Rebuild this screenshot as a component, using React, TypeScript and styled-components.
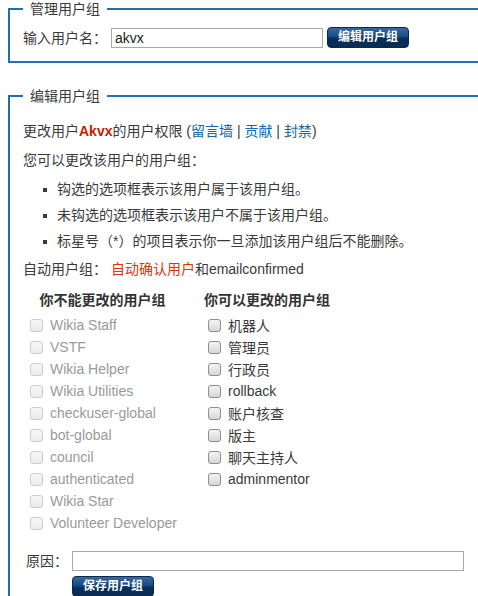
import { createGlobalStyle } from 'styled-components';
import styled from 'styled-components';

const GlobalStyle = createGlobalStyle`
  html, body {
    margin: 0;
    overflow: hidden;
    background: #fff;
  }

  body {
    padding: 0 0 0 8px;
    font-family: "Liberation Sans", "Noto Sans CJK SC", sans-serif;
    font-size: 14px;
    color: #3a3a3a;
  }
`;

const Fieldset = styled.fieldset<{ $top?: number }>`
  margin: ${({ $top }) => $top || 0}px 0 0 0;
  width: 100%;
  box-sizing: border-box;
  border: 2px solid #1f6fb2;
  border-right: none;
  padding: 9px 13px 13px 13px;
  min-inline-size: 0;
`;

const Legend = styled.legend`
  padding: 0 7px;
  line-height: 18px;
  font-size: 14px;
  color: #3a3a3a;
`;

const LookupRow = styled.div`
  display: flex;
  align-items: center;
  height: 21px;
  gap: 4px;
`;

const Label = styled.span`
  line-height: 20px;
  white-space: nowrap;
`;

const TextInput = styled.input<{ $width: number }>`
  width: ${({ $width }) => $width}px;
  height: 20px;
  box-sizing: border-box;
  margin: 0;
  padding: 0 3px;
  border: 1px solid #a9a9a9;
  font-family: "Liberation Sans", "Noto Sans CJK SC", sans-serif;
  font-size: 14px;
  color: #222;
  outline: none;
`;

const Button = styled.button`
  height: 21px;
  box-sizing: border-box;
  margin: 0;
  padding: 0 10px;
  border: 1px solid #062a52;
  border-radius: 4px;
  background: linear-gradient(to bottom, #3a689c 0%, #174a82 45%, #06305f 55%, #0a2b52 100%);
  color: #fff;
  font-family: "Liberation Sans", "Noto Sans CJK SC", sans-serif;
  font-size: 12px;
  font-weight: bold;
  line-height: 19px;
  white-space: nowrap;
`;

const Body = styled.div`
  padding-top: 7px;
`;

const Para = styled.p`
  margin: 0 0 8px 0;
  line-height: 21px;
`;

const User = styled.b`
  color: #cc1a00;
`;

const Link = styled.a<{ $red?: boolean }>`
  color: ${({ $red }) => ($red ? '#e2310c' : '#1269b0')};
  text-decoration: none;
`;

const Notes = styled.ul`
  margin: 0 0 7px 0;
  padding: 0;
  list-style: none;
`;

const Note = styled.li`
  position: relative;
  padding-left: 34px;
  line-height: 21px;

  & + & {
    margin-top: 5px;
  }

  &::before {
    content: "";
    position: absolute;
    left: 20px;
    top: 9px;
    width: 4px;
    height: 4px;
    background: #3a3a3a;
  }
`;

const Groups = styled.table`
  margin: 7px 0 0 3px;
  border-collapse: collapse;

  & th, & td {
    padding: 0;
    vertical-align: middle;
  }

  & th:first-child, & td:first-child {
    width: 153px;
    padding-right: 25px;
  }
`;

const Head = styled.th`
  height: 26px;
  padding-bottom: 2px !important;
  text-align: center;
  font-size: 14px;
  font-weight: bold;
  line-height: 24px;
  color: #333;
  white-space: nowrap;
  box-sizing: border-box;
`;

const Option = styled.label<{ $disabled?: boolean }>`
  display: flex;
  align-items: center;
  height: 22px;
  white-space: nowrap;
  color: ${({ $disabled }) => ($disabled ? '#9a9a9a' : '#3a3a3a')};
`;

const Box = styled.input`
  appearance: none;
  width: 13px;
  height: 13px;
  box-sizing: border-box;
  margin: 0 7px 0 4px;
  border: 1px solid #8e8e8e;
  border-radius: 3px;
  background: linear-gradient(to bottom, #f4f4f4, #d6d6d6);

  &:disabled {
    border-color: #cdcdcd;
    background: linear-gradient(to bottom, #f7f7f7, #ebebeb);
  }
`;

const ReasonRow = styled.div`
  display: flex;
  align-items: center;
  margin: 17px 0 0 3px;
  height: 20px;
`;

const ReasonLabel = styled.span`
  width: 46px;
  line-height: 20px;
`;

const SaveRow = styled.div`
  margin: 5px 0 0 49px;
`;

const fixed = [
  'Wikia Staff',
  'VSTF',
  'Wikia Helper',
  'Wikia Utilities',
  'checkuser-global',
  'bot-global',
  'council',
  'authenticated',
  'Wikia Star',
  'Volunteer Developer',
];

const editable = ['机器人', '管理员', '行政员', 'rollback', '账户核查', '版主', '聊天主持人', 'adminmentor'];

export default function App() {
  return (
    <>
      <GlobalStyle />
      <Fieldset>
        <Legend>管理用户组</Legend>
        <LookupRow>
          <Label>输入用户名：</Label>
          <TextInput $width={212} defaultValue="akvx" />
          <Button>编辑用户组</Button>
        </LookupRow>
      </Fieldset>

      <Fieldset $top={24}>
        <Legend>编辑用户组</Legend>
        <Body>
          <Para>
            更改用户<User>Akvx</User>的用户权限 (<Link>留言墙</Link> | <Link>贡献</Link> | <Link>封禁</Link>)
          </Para>
          <Para>您可以更改该用户的用户组：</Para>
          <Notes>
            <Note>钩选的选项框表示该用户属于该用户组。</Note>
            <Note>未钩选的选项框表示该用户不属于该用户组。</Note>
            <Note>标星号（*）的项目表示你一旦添加该用户组后不能删除。</Note>
          </Notes>
          <Para>
            自动用户组： <Link $red>自动确认用户</Link>和emailconfirmed
          </Para>
          <Groups>
            <thead>
              <tr>
                <Head>你不能更改的用户组</Head>
                <Head>你可以更改的用户组</Head>
              </tr>
            </thead>
            <tbody>
              {fixed.map((name, i) => (
                <tr key={name}>
                  <td>
                    <Option $disabled>
                      <Box type="checkbox" disabled />
                      {name}
                    </Option>
                  </td>
                  <td>
                    {editable[i] && (
                      <Option>
                        <Box type="checkbox" />
                        {editable[i]}
                      </Option>
                    )}
                  </td>
                </tr>
              ))}
            </tbody>
          </Groups>
          <ReasonRow>
            <ReasonLabel>原因：</ReasonLabel>
            <TextInput $width={392} />
          </ReasonRow>
          <SaveRow>
            <Button>保存用户组</Button>
          </SaveRow>
        </Body>
      </Fieldset>
    </>
  );
}
